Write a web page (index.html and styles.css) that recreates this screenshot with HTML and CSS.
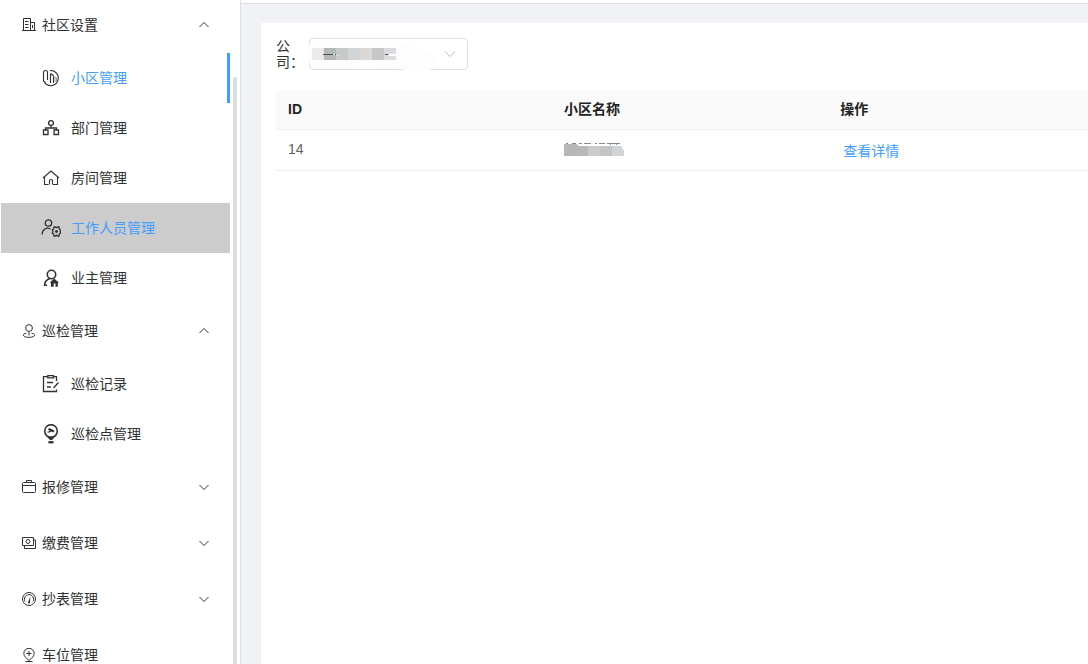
FILE: index.html
```html
<!DOCTYPE html>
<html lang="zh-CN">
<head>
<meta charset="utf-8">
<meta name="viewport" content="width=device-width, initial-scale=1">
<title>小区管理</title>
<link rel="stylesheet" href="styles.css">
</head>
<body>
<div class="layout">
  <aside class="sidebar">
    <nav class="menu">
      <button class="group" type="button" aria-expanded="true">
        <svg class="icon-sm" viewBox="0 0 14 14"><path d="M1.500 13V.5H8.500V13M8.500 4.500H12.500V13M0 12.500H14M3 3.500H6.500M3 6.500H6.500M3 9.500H6.500M10.500 7V10"/></svg>
        <span class="text">社区设置</span>
        <svg class="arrow" viewBox="0 0 12 12"><path d="M1.500 8L6 3.500L10.500 8"/></svg>
      </button>
      <a class="item active" href="#">
        <svg class="icon" viewBox="0 0 20 20"><path class="thin" d="M4.500 14.500L2.500 13V4.500Q2.500 2.500 4.500 2.500T6.500 4.500V12M9 2.500A7.600 7.600 0 1 1 3.500 14.500M9.500 15V6.500Q9.500 5 11 6.500L12.500 8V15"/><path class="faint" d="M12.500 8.500L15.500 10V13.500M14 9.500V14"/></svg>
        <span class="text">小区管理</span>
      </a>
      <a class="item" href="#">
        <svg class="icon" viewBox="0 0 20 20"><circle cx="10" cy="5" r="2.400"/><path d="M10 7.500V10M4.500 12V10H15.500V12M2.500 12H7V16.500H2.500ZM13 12H17.500V16.500H13Z"/></svg>
        <span class="text">部门管理</span>
      </a>
      <a class="item" href="#">
        <svg class="icon" viewBox="0 0 20 20"><path class="thin" d="M2 10L10 3L18 10M3.500 9V16.500H7.500M12 16.500H16.500V9M8.500 16.500V12.500Q8.500 11.500 10 11.500T11.500 12.500V16.500"/></svg>
        <span class="text">房间管理</span>
      </a>
      <a class="item hovered" href="#">
        <svg class="icon" viewBox="0 0 20 20"><circle cx="7.500" cy="5" r="3.200"/><path d="M1 16.500C1.500 11 5.500 9 9.500 11M13 9H14.500L15.500 9.700L16.500 9H18L18.300 11L19.700 12L19 13.500L19.700 15L18.300 16L18 18H16.500L15.500 17.300L14.500 18H13L12.700 16L11.300 15L12 13.500L11.300 12L12.700 11Z"/><circle class="solid" cx="15.500" cy="13.500" r="1.400"/></svg>
        <span class="text">工作人员管理</span>
      </a>
      <a class="item" href="#">
        <svg class="icon" viewBox="0 0 20 20"><circle class="heavy" cx="10.500" cy="6.500" r="4.200"/><path class="heavy" d="M3.500 18C3.500 14 5.500 11.500 9 10.500M3 17.300H6"/><path class="solid" d="M13.200 10.500L18 14.700H16.800V18.700H14.500V15.500H12.700V18.700H10V14.700H8.600Z"/></svg>
        <span class="text">业主管理</span>
      </a>

      <button class="group" type="button" aria-expanded="true">
        <svg class="icon-sm" viewBox="0 0 14 14"><circle cx="7" cy="4" r="3.400"/><path d="M7 7.500V11.500M4.500 9.200C-.5 10 .5 13.400 7 13.400S14.500 10 9.500 9.200"/></svg>
        <span class="text">巡检管理</span>
        <svg class="arrow" viewBox="0 0 12 12"><path d="M1.500 8L6 3.500L10.500 8"/></svg>
      </button>
      <a class="item" href="#">
        <svg class="icon" viewBox="0 0 20 20"><path d="M6.500 2.700H2.500V17.500H15.500V15.500M13 2.700H15.500V7M6.800 1.600H12.500V3.900H6.800ZM6 8.500H12M6 13H10M12.500 14L17.500 8.500"/></svg>
        <span class="text">巡检记录</span>
      </a>
      <a class="item" href="#">
        <svg class="icon" viewBox="0 0 20 20"><circle class="heavy" cx="10" cy="7" r="6.300"/><path class="solid" d="M4.200 11Q10 14 15.800 11L11 16H9ZM8 4L13.500 6.500L12.500 8.500L10 7.500L9 8.500H6.500V7.500H8L8.500 6.500L7 5.800Z"/><ellipse class="solid" cx="10" cy="18.300" rx="3" ry="1.200"/></svg>
        <span class="text">巡检点管理</span>
      </a>

      <button class="group" type="button" aria-expanded="false">
        <svg class="icon-sm" viewBox="0 0 14 14"><rect x=".5" y="2.500" width="13" height="10" rx="1"/><path d="M.5 5.500H13.500M4.500 2.500V.5H9.500V2.500"/></svg>
        <span class="text">报修管理</span>
        <svg class="arrow" viewBox="0 0 12 12"><path d="M1.500 4L6 8.500L10.500 4"/></svg>
      </button>
      <button class="group" type="button" aria-expanded="false">
        <svg class="icon-sm" viewBox="0 0 14 14"><path d="M.5 1.500H11.500V9.500H.5ZM2.500 9.500V12.500H13.500V4H11.500"/><circle cx="6" cy="5.500" r="2"/></svg>
        <span class="text">缴费管理</span>
        <svg class="arrow" viewBox="0 0 12 12"><path d="M1.500 4L6 8.500L10.500 4"/></svg>
      </button>
      <button class="group" type="button" aria-expanded="false">
        <svg class="icon-sm" viewBox="0 0 14 14"><circle cx="7" cy="7" r="6.500"/><path d="M3 9.500A4.600 4.600 0 1 1 11 9.500"/><path class="solid" d="M8.300 4.500L8 10.500A1 1 0 1 1 6.300 9.800Z"/></svg>
        <span class="text">抄表管理</span>
        <svg class="arrow" viewBox="0 0 12 12"><path d="M1.500 4L6 8.500L10.500 4"/></svg>
      </button>
      <button class="group" type="button">
        <svg class="icon-sm" viewBox="0 0 14 14"><path d="M7 12.500C4 10 1.800 8 1.800 5.500A5.200 5.200 0 0 1 12.200 5.500C12.200 8 10 10 7 12.500M3.500 13.500H10.500M7 3V8M4.500 5.500H9.500"/></svg>
        <span class="text">车位管理</span>
      </button>
    </nav>
    <div class="scroll-thumb"></div>
  </aside>

  <div class="page">
    <header class="topbar"></header>
    <main class="card">
      <form class="filter">
        <label class="filter-label" for="company">公司：</label>
        <div class="select-box">
          <select class="select" id="company"><option></option></select>
          <svg class="redaction" viewBox="0 0 160 32" aria-hidden="true">
            <path fill="#fdfdfd" d="M-2 10Q0 4 14 3H80Q104 6 106 10L126 16V26Q124 30 121 32H94V29L60 26L50 24L40 27H10Q-2 27-2 20Z"/>
            <g shape-rendering="crispEdges">
              <path fill="#ebeae8" d="M3 10H15V22H3Z"/><path fill="#b5b8b9" d="M15 10H27V22H15Z"/><path fill="#c6c9c8" d="M27 10H39V22H27Z"/><path fill="#d1d5d8" d="M39 10H51V22H39Z"/><path fill="#dad9d7" d="M51 10H63V22H51Z"/><path fill="#c5c7c9" d="M63 10H75V22H63Z"/><path fill="#dadce0" d="M75 10H87V22H75Z"/>
              <path fill="#505458" d="M14 16H24V17H14ZM26 16H27V17H26ZM76 16H79V17H76Z"/><path fill="#fff" d="M25 16H26V17H25ZM28 17H29V18H28ZM80 16H87V18H80Z"/>
            </g>
          </svg>
          <svg class="caret" viewBox="0 0 12 12" aria-hidden="true"><path d="M1 3.500L6 8.500L11 3.500"/></svg>
        </div>
      </form>
      <table class="table">
        <thead>
          <tr><th class="col">ID</th><th class="col">小区名称</th><th>操作</th></tr>
        </thead>
        <tbody>
          <tr>
            <td>14</td>
            <td>
              <svg class="masked-name" viewBox="0 0 60 16" role="img" aria-label="名称已隐藏" shape-rendering="crispEdges">
                <path stroke="#888" fill="none" d="M2 2.500H4M8 2.500H12M15 2.500H18M20 2.500H27M31 2.500H33M35 2.500H41M43 2.500H56M46 1.500V4M52 1.500V4"/>
                <path fill="#b8b7b6" d="M0 3H12L15 5V15H0Z"/><path fill="#b6b8ba" d="M13 5H24V15H13Z"/><path fill="#c9cacc" d="M24 5H36V15H24Z"/><path fill="#c2c4c5" d="M36 5H48V15H36Z"/><path fill="#d2d5d8" d="M48 5H57L60 10V15H48Z"/>
              </svg>
            </td>
            <td><button class="link" type="button">查看详情</button></td>
          </tr>
        </tbody>
      </table>
    </main>
  </div>
</div>
</body>
</html>
```

FILE: styles.css
```css
* {
  box-sizing: border-box;
}

body {
  margin: 0;
  font-family: "Liberation Sans", "Noto Sans CJK SC", sans-serif;
  font-size: 14px;
  color: #303133;
  background: #fff;
}

button,
select {
  font: inherit;
}

svg {
  display: block;
  flex: none;
}

.layout {
  display: flex;
  height: 100vh;
  overflow: hidden;
}

/* Sidebar */
.sidebar {
  position: relative;
  flex: none;
  width: 241px;
  padding: 0 10px 0 1px;
  overflow: hidden;
  border-right: 1px solid #dcdfe6;
}

.menu {
  margin-top: -3px;
}

.group,
.item {
  display: flex;
  align-items: center;
  width: 100%;
  color: #303133;
  text-decoration: none;
}

.group {
  gap: 6px;
  height: 56px;
  padding: 0 20px 0 21px;
  border: 0;
  background: none;
  text-align: left;
}

.item {
  gap: 10px;
  height: 50px;
  padding-left: 40px;
}

.item.active {
  border-right: 3px solid #409eff;
}

.item.active .text,
.item.hovered .text {
  color: #409eff;
}

.item.hovered {
  background: #ccc;
}

.text {
  flex: 1;
  line-height: 20px;
}

.icon,
.icon-sm,
.arrow,
.caret {
  fill: none;
  stroke: #303133;
}

.icon {
  width: 20px;
  height: 20px;
  stroke-width: 1.3;
}

.icon-sm {
  width: 14px;
  height: 14px;
}

.arrow {
  width: 12px;
  height: 12px;
}

.thin {
  stroke-width: 1.1;
}

.faint {
  stroke: #999;
  stroke-width: 1;
}

.heavy {
  stroke-width: 1.6;
}

.solid {
  fill: #303133;
  stroke: none;
}

.scroll-thumb {
  position: absolute;
  top: 77px;
  right: 3px;
  bottom: 0;
  width: 4px;
  border-radius: 4px 4px 0 0;
  background: #ddd;
}

/* Content */
.page {
  display: flex;
  flex: 1;
  flex-direction: column;
  min-width: 0;
  background: #f0f2f5;
}

.topbar {
  flex: none;
  height: 4px;
  border-bottom: 1px solid #dcdfe6;
  background: #fff;
}

.card {
  flex: 1;
  margin: 19px 0 0 20px;
  padding: 15px 0 0 15px;
  background: #fff;
}

.filter {
  display: flex;
  margin-bottom: 20px;
}

.filter-label {
  width: 33px;
  line-height: 16px;
}

.select-box {
  position: relative;
  width: 159px;
}

.select {
  display: block;
  width: 100%;
  height: 32px;
  padding: 0 30px 0 12px;
  border: 1px solid #dcdfe6;
  border-radius: 4px;
  background: #fff;
  appearance: none;
}

.redaction {
  position: absolute;
  top: 0;
  left: 0;
  width: 160px;
  height: 32px;
  overflow: visible;
  pointer-events: none;
}

.caret {
  position: absolute;
  top: 10px;
  right: 12px;
  width: 12px;
  height: 12px;
  stroke: #b4b8c0;
  pointer-events: none;
}

.table {
  width: 100%;
  border-collapse: separate;
  border-spacing: 0;
  table-layout: fixed;
  line-height: 20px;
  text-align: left;
}

.col {
  width: 34%;
}

.table th,
.table td {
  height: 40px;
  padding: 0 12px 2px;
  border-bottom: 1px solid #ebeef5;
}

.table th {
  color: #222;
  background: #fafafa;
}

.table td {
  height: 41px;
  color: #606266;
}

.masked-name {
  width: 60px;
  height: 16px;
}

.link {
  display: block;
  padding: 4px 3px 0;
  border: 0;
  background: none;
  color: #409eff;
  line-height: 20px;
}
```
